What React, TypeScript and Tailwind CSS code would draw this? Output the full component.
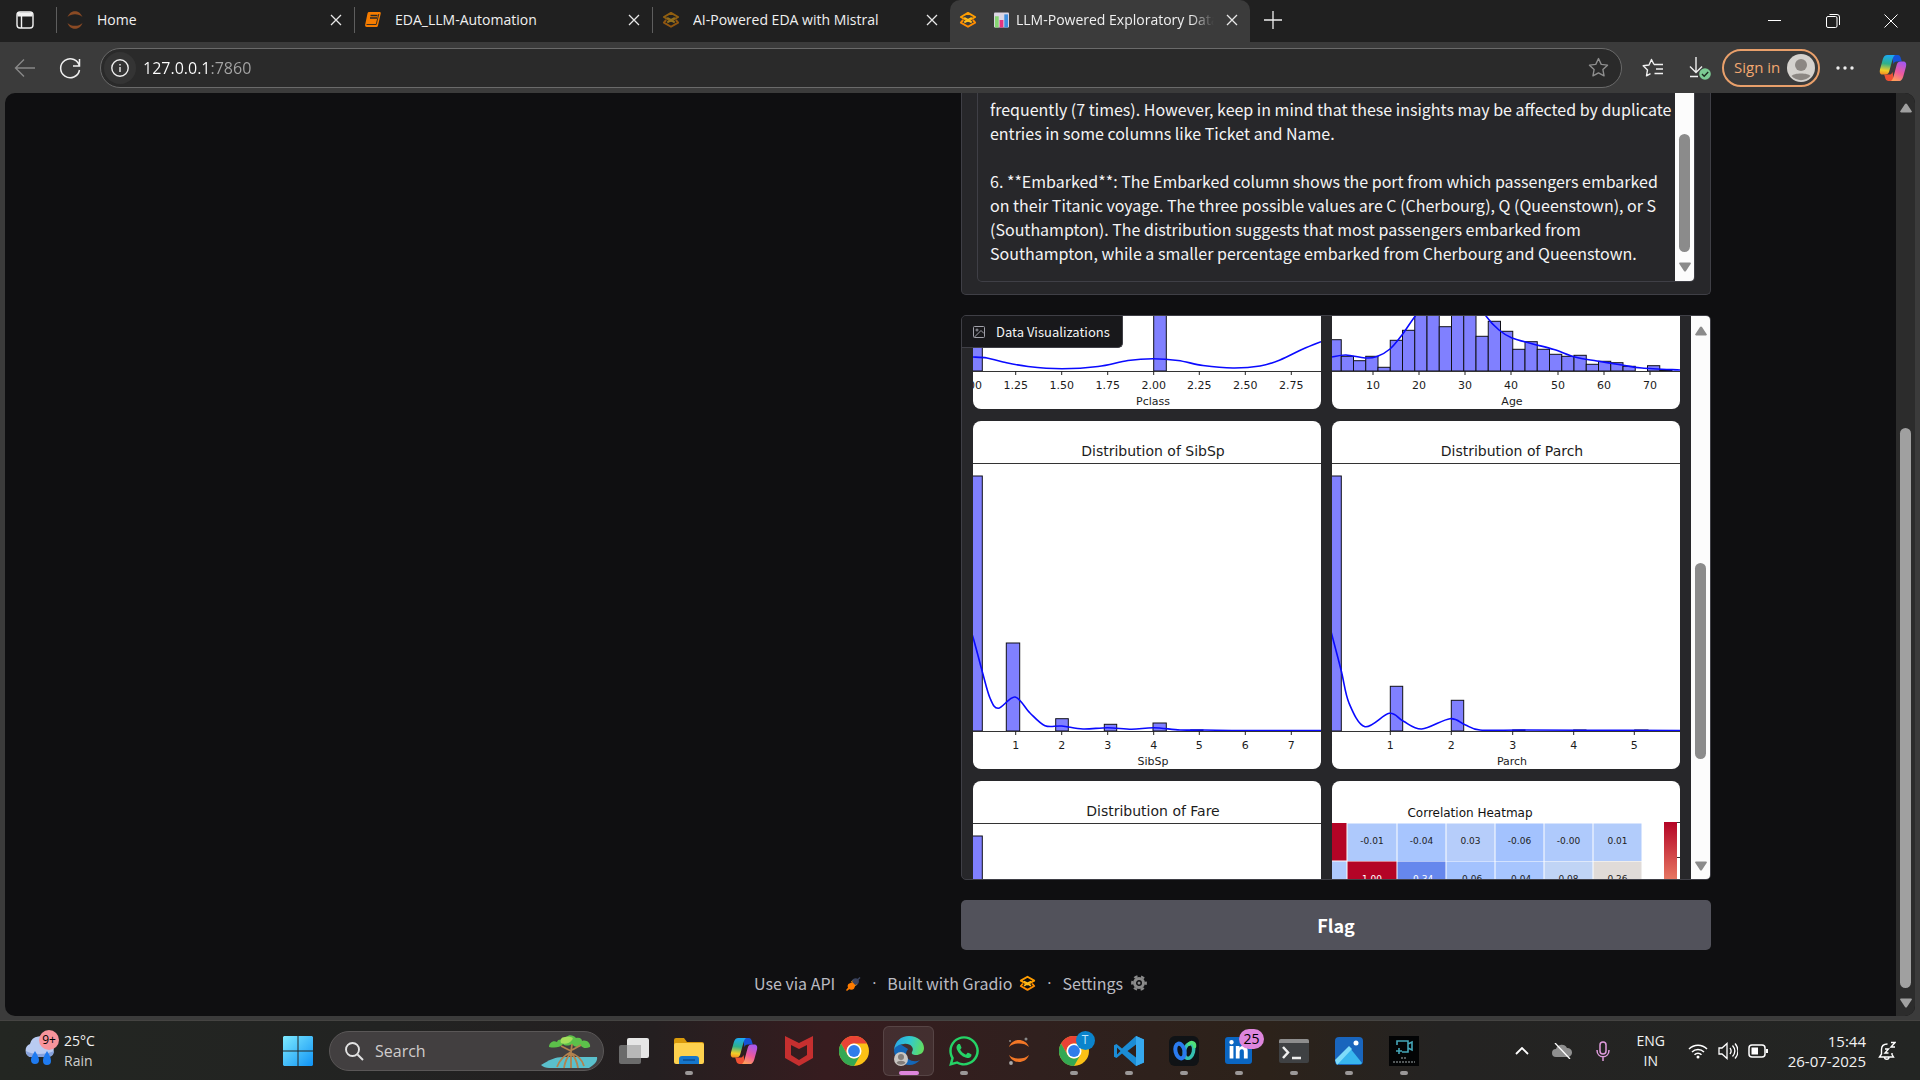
import { type ReactNode } from "react";
import { FaWhatsapp } from "react-icons/fa";
import { FaLinkedinIn } from "react-icons/fa6";

type Pt = [number, number];
type Bar = [number, number, number];

/* Catmull-Rom spline through the given points, as an SVG path. */
function spline(p: Pt[]): string {
  let d = `M${p[0][0]} ${p[0][1]}`;
  for (let i = 0; i < p.length - 1; i++) {
    const a = p[i - 1] ?? p[i];
    const b = p[i];
    const c = p[i + 1];
    const e = p[i + 2] ?? c;
    d += ` C${b[0] + (c[0] - a[0]) / 6} ${b[1] + (c[1] - a[1]) / 6} ${c[0] - (e[0] - b[0]) / 6} ${c[1] - (e[1] - b[1]) / 6} ${c[0]} ${c[1]}`;
  }
  return d;
}

/* ---------- charts ---------- */

const AXIS = 310;

interface HistProps {
  title?: string;
  label: string;
  ticks: [number, string][];
  bars: Bar[];
  curves: Pt[][];
  cropped?: boolean;
}

function Histogram({ title, label, ticks, bars, curves, cropped }: HistProps) {
  return (
    <button aria-label={`Distribution of ${label}`} className={`block w-full overflow-hidden bg-white ${cropped ? "rounded-b-lg" : "rounded-lg"}`}>
      <svg viewBox={cropped ? "0 255 348 93" : "0 0 348 348"} className="block w-full font-['DejaVu_Sans',sans-serif]" fill="#1c1c1c">
        {bars.map(([x0, x1, y]) => (
          <rect key={x0} x={x0} y={y} width={x1 - x0} height={AXIS - y} fill="#8080ff" stroke="#101018" strokeWidth="1" />
        ))}
        {curves.map((c, i) => (
          <path key={i} d={spline(c)} fill="none" stroke="#0a0aff" strokeWidth="1.6" />
        ))}
        <path d={`M0 42.500H348M0 ${AXIS + 0.5}H348`} stroke="#333" strokeWidth="1" />
        {ticks.map(([x, t]) => (
          <g key={x}>
            <path d={`M${x} ${AXIS}v4`} stroke="#222" strokeWidth="1" />
            <text x={x} y={328} fontSize="11" textAnchor="middle">{t}</text>
          </g>
        ))}
        {title && <text x={180} y={35} fontSize="14" textAnchor="middle">{title}</text>}
        <text x={180} y={344} fontSize="11" textAnchor="middle">{label}</text>
      </svg>
    </button>
  );
}

const HEAT_X = [15, 65, 114, 163, 212, 261, 310];
const HEAT_ROWS: { y: number; cells: [string, string, string][] }[] = [
  { y: 42, cells: [["-0.01", "#aec9fc", "#222"], ["-0.04", "#a7c5fe", "#222"], ["0.03", "#b6cdfa", "#222"], ["-0.06", "#a3c2fe", "#222"], ["-0.00", "#afcafc", "#222"], ["0.01", "#b2ccfb", "#222"]] },
  { y: 80, cells: [["1.00", "#b40426", "#fff"], ["-0.34", "#6687ed", "#fff"], ["-0.06", "#a3c2fe", "#222"], ["-0.04", "#a7c5fe", "#222"], ["0.08", "#c0d4f5", "#222"], ["0.26", "#e0dbd8", "#222"]] },
];

function Heatmap() {
  return (
    <button aria-label="Correlation Heatmap" className="block w-full overflow-hidden rounded-lg bg-white">
      <svg viewBox="0 0 348 348" className="block w-full font-['DejaVu_Sans',sans-serif]">
        <defs>
          <linearGradient id="coolwarm" x1="0" y1="0" x2="0" y2="1">
            <stop offset="0" stopColor="#b40426" />
            <stop offset="0.25" stopColor="#f08a6c" />
            <stop offset="0.5" stopColor="#dddcdc" />
            <stop offset="0.75" stopColor="#8db0fe" />
            <stop offset="1" stopColor="#3b4cc0" />
          </linearGradient>
        </defs>
        <text x={138} y={36} fontSize="12" textAnchor="middle" fill="#111">Correlation Heatmap</text>
        <rect x={-34} y={42} width={48.5} height={37.5} fill="#b40426" />
        <rect x={-34} y={80.5} width={48.5} height={37.5} fill="#aec9fc" />
        {HEAT_ROWS.map((r) =>
          r.cells.map(([t, bg, fg], i) => (
            <g key={`${r.y}-${i}`}>
              <rect x={HEAT_X[i] + 0.5} y={r.y + 0.5} width={HEAT_X[i + 1] - HEAT_X[i] - 1} height={37.5} fill={bg} />
              <text x={(HEAT_X[i] + HEAT_X[i + 1]) / 2} y={r.y + 21} fontSize="9" textAnchor="middle" fill={fg}>{t}</text>
            </g>
          )),
        )}
        <rect x={332} y={41} width={13} height={268} fill="url(#coolwarm)" />
        <path d="M345 41.500h3M345 76.500h3" stroke="#333" />
      </svg>
    </button>
  );
}

const AGE_TOPS = [278.7, 295.3, 299.7, 295.3, 306.3, 279.3, 269.3, 200, 180, 265.7, 180, 200, 275.3, 260.3, 270.3, 288.3, 280.7, 288.3, 293.3, 295.3, 294.3, 303.3, 300.3, 301.7, 305.3, 310, 304.7, 309];
const AGE_BARS: Bar[] = AGE_TOPS.map((y, i): Bar => [-3 + i * 12.25, 9.25 + i * 12.25, y]).filter((b) => b[2] < 310);

const TICKS_7: number[] = [42.7, 88.7, 134.7, 180.7, 226.3, 272.3, 318.3];

function Gallery() {
  return (
    <div className="grid min-w-0 flex-1 auto-rows-max grid-cols-2 content-start gap-x-[11px] gap-y-3 overflow-hidden px-[11px]">
      <Histogram
        cropped
        label="Pclass"
        ticks={[[-3.3, "1.00"], ...["1.25", "1.50", "1.75", "2.00", "2.25", "2.50", "2.75"].map((t, i): [number, string] => [TICKS_7[i], t])]}
        bars={[[-3, 9.3, 200], [180.7, 193.3, 200]]}
        curves={[[[0, 296], [14, 297], [30, 301], [55, 305.5], [89, 307.7], [125, 305.5], [155, 299.5], [180, 297.7], [205, 299.5], [230, 304.5], [260, 307], [287, 305], [307, 299], [330, 288], [348, 280.7]]]}
      />
      <Histogram
        cropped
        label="Age"
        ticks={["10", "20", "30", "40", "50", "60", "70"].map((t, i): [number, string] => [[41, 87, 133, 179, 226, 272, 318][i], t])}
        bars={AGE_BARS}
        curves={[
          [[0, 296], [14, 294], [33, 297], [45, 295.5], [58, 288], [70, 274], [84, 254], [100, 235]],
          [[143, 235], [154, 255], [167, 269], [180, 277], [200, 282.7], [222, 288.5], [243, 296], [265, 300], [290, 304], [310, 307], [348, 309]],
        ]}
      />
      <Histogram
        title="Distribution of SibSp"
        label="SibSp"
        ticks={[[-3.3, "0"], ...["1", "2", "3", "4", "5", "6", "7"].map((t, i): [number, string] => [TICKS_7[i], t])]}
        bars={[[-3, 9.3, 55], [33.3, 46.7, 222], [82.7, 95.3, 297.7], [131.3, 143.7, 303.3], [180, 193.3, 302], [217.7, 230, 309]]}
        curves={[[[-4, 208], [0, 216.3], [9.3, 250.7], [17, 277], [25.3, 287.3], [42, 276], [57, 292], [72, 304.7], [88.7, 305], [110, 308], [134.7, 306.7], [158.7, 308.3], [180.7, 306.7], [207, 309], [230, 309], [272, 309.5], [348, 309.5]]]}
      />
      <Histogram
        title="Distribution of Parch"
        label="Parch"
        ticks={[[-3.3, "0"], [58.3, "1"], [119.3, "2"], [180.7, "3"], [241.7, "4"], [302.3, "5"]]}
        bars={[[-3, 9.3, 55], [58.3, 70.7, 265.3], [119.3, 131.7, 279.3], [180.7, 193, 309], [241.7, 254, 309], [302.7, 316, 309]]}
        curves={[[[-3, 205], [0, 214.3], [9.3, 250], [17, 282], [33, 305.7], [57.3, 292.3], [71, 300], [89.7, 308], [118, 297.7], [133, 303.7], [148, 309], [190, 309], [250, 309.3], [348, 309.5]]]}
      />
      <Histogram title="Distribution of Fare" label="Fare" ticks={[]} bars={[[-3, 9.3, 55]]} curves={[]} />
      <Heatmap />
    </div>
  );
}

/* ---------- small icons ---------- */

function CloseX() {
  return (
    <svg viewBox="0 0 12 12" className="size-3" fill="none" stroke="#e8e8e8" strokeWidth="1.3">
      <path d="M1 1l10 10M11 1L1 11" />
    </svg>
  );
}

function GradioLogo({ className }: { className: string }) {
  return (
    <svg viewBox="0 0 24 24" className={className} fill="none" strokeLinejoin="round">
      <path d="M2.500 8L12 2.500 21.500 8 12 13.500z" stroke="#ff9d00" strokeWidth="2.600" />
      <path d="M7 15.200l5-2.700 5 2.700" stroke="#ffc01e" strokeWidth="2.400" />
      <path d="M7 9l5 2.500L17 9" stroke="#ffc01e" strokeWidth="2" />
      <path d="M5.500 12L2.500 15.500 12 21l9.500-5.500-3-3.500" stroke="#ff8c00" strokeWidth="2.600" />
    </svg>
  );
}

function JupyterRing({ className, color }: { className: string; color: string }) {
  return (
    <svg viewBox="0 0 20 24" className={className} fill={color}>
      <path d="M1 8.500C3 3.500 6.500 1.500 10 1.500s7 2 9 7C16.500 6 13.500 5 10 5S3.500 6 1 8.500z" />
      <path d="M1 15.500c2 5 5.500 7 9 7s7-2 9-7c-2.500 2.500-5.500 3.500-9 3.500s-6.500-1-9-3.500z" />
    </svg>
  );
}

function Copilot({ className, id }: { className: string; id: string }) {
  return (
    <svg viewBox="0 0 30 30" className={className}>
      <defs>
        <linearGradient id={`${id}a`} x1="0.500" y1="0" x2="0.400" y2="1">
          <stop offset="0" stopColor="#1ba9f5" />
          <stop offset="0.450" stopColor="#2fb08a" />
          <stop offset="0.800" stopColor="#f0cf28" />
          <stop offset="1" stopColor="#f58f22" />
        </linearGradient>
        <linearGradient id={`${id}b`} x1="0.700" y1="0" x2="0.300" y2="1">
          <stop offset="0" stopColor="#a457f0" />
          <stop offset="0.550" stopColor="#ee5a9c" />
          <stop offset="1" stopColor="#ffa05a" />
        </linearGradient>
      </defs>
      <path d="M14 1h6c2.500 0 3 2 3.700 4.500L24.500 8H19c-2 0-3 1-3.500 3z" fill="#1552d8" />
      <path d="M16 29h-6c-2.500 0-3-2-3.700-4.500L5.500 22H11c2 0 3-1 3.500-3z" fill="#ee5133" />
      <path d="M9 1h8.500c-1.500.5-2.300 2-3 4.500L11 18.500C10.300 21 9 22 6.500 22H4C1 22 .3 19.500 1.200 16L4 6C5 2.500 6.500 1 9 1z" fill={`url(#${id}a)`} />
      <path d="M21 29h-8.500c1.500-.5 2.300-2 3-4.500L19 11.500c.7-2.500 2-3.500 4.500-3.500H26c3 0 3.700 2.500 2.800 6L26 24c-1 3.500-2.500 5-5 5z" fill={`url(#${id}b)`} />
    </svg>
  );
}

function ChartEmoji() {
  return (
    <svg viewBox="0 0 16 16" className="h-4 w-[15px] shrink-0">
      <rect width="16" height="16" rx="1" fill="#dcd6e4" />
      <rect x="1" y="4" width="4" height="12" fill="#86d672" />
      <rect x="6" y="8" width="4" height="8" fill="#e5357f" />
      <rect x="11" y="2" width="4" height="14" fill="#3e8fe0" />
    </svg>
  );
}

/* ---------- browser chrome ---------- */

function Tab({ icon, title, active }: { icon: ReactNode; title: string; active?: boolean }) {
  return (
    <div className={`flex h-[42px] min-w-0 items-center pb-0.5 pr-3 ${active ? "w-[300px] rounded-t-[10px] bg-[#3b3b3b] pl-2" : "w-[298px] pl-0"}`}>
      {!active && <span className="mr-2 h-[26px] w-px bg-[#5e5e5e]" />}
      <span className="flex w-5 shrink-0 justify-center">{icon}</span>
      {active && <span className="ml-4 flex shrink-0"><ChartEmoji /></span>}
      <span className={`min-w-0 flex-1 overflow-hidden whitespace-nowrap text-sm text-[#f0f0f0] ${active ? "ml-[7px] mr-3 [mask-image:linear-gradient(to_right,black_88%,transparent)]" : "ml-3"}`}>{title}</span>
      <button aria-label={`Close ${title}`} className="shrink-0"><CloseX /></button>
    </div>
  );
}

function TabBar() {
  return (
    <div className="flex h-[42px] items-center bg-[#202020]">
      <button aria-label="Tab actions" className="flex w-[56px] shrink-0 pb-0.5 pl-4">
        <svg viewBox="0 0 18 18" className="size-[18px]" fill="none" stroke="#f2f2f2" strokeWidth="1.400">
          <rect x="1" y="1" width="16" height="16" rx="3" />
          <path d="M1.500 3.500h15" strokeWidth="4" />
          <path d="M5.500 5v12" />
        </svg>
      </button>
      <Tab title="Home" icon={<JupyterRing className="h-5 w-[18px]" color="#8a4a24" />} />
      <Tab
        title="EDA_LLM-Automation"
        icon={
          <svg viewBox="0 0 18 18" className="size-[18px]">
            <path d="M5 1h10.500c1 0 1.500.7 1.200 1.700L14 14.500c-.3 1-.8 1.500-2 1.500H3.500C1.500 16.500.8 15 1.200 13.500L3.500 2.500C3.800 1.500 4.300 1 5 1z" fill="#f57c00" />
            <path d="M6.500 4.500h7M6 7h7" stroke="#262626" strokeWidth="1.300" />
            <path d="M2.500 13.500h9.700L14.800 3" stroke="#262626" strokeWidth="0.900" fill="none" />
          </svg>
        }
      />
      <Tab title="AI-Powered EDA with Mistral" icon={<GradioLogo className="size-[18px] opacity-50" />} />
      <Tab active title="LLM-Powered Exploratory Data Analysis" icon={<GradioLogo className="size-[18px]" />} />
      <button aria-label="New tab" className="ml-3.5 pb-0.5">
        <svg viewBox="0 0 18 18" className="size-[18px]" stroke="#eee" strokeWidth="1.300"><path d="M9 0v18M0 9h18" /></svg>
      </button>
      <div className="ml-auto flex">
        <button aria-label="Minimize" className="flex w-[58px] justify-center">
          <svg viewBox="0 0 14 14" className="size-[14px]" stroke="#fff"><path d="M0 6.500h13" /></svg>
        </button>
        <button aria-label="Restore" className="flex w-[58px] justify-center">
          <svg viewBox="0 0 14 14" className="size-[14px]" fill="none" stroke="#fff"><rect x="0.500" y="2.500" width="10.500" height="11" rx="1.500" /><path d="M3.500.5h7.500a2.500 2.500 0 0 1 2.500 2.500v8" /></svg>
        </button>
        <button aria-label="Close window" className="flex w-[58px] justify-center">
          <svg viewBox="0 0 14 14" className="size-[14px]" stroke="#fff"><path d="M.5.5l13 13M13.500.5l-13 13" /></svg>
        </button>
      </div>
    </div>
  );
}

const STAR = "M10 1.500l2.600 5.500 6 .8-4.400 4.200 1.100 6L10 15.100 4.700 18l1.100-6L1.400 7.800l6-.8z";

function Toolbar() {
  return (
    <div className="flex h-[51px] items-center bg-[#3b3b3b]">
      <button aria-label="Back" className="ml-[14px]">
        <svg viewBox="0 0 22 20" className="h-5 w-[22px]" fill="none" stroke="#888" strokeWidth="1.400"><path d="M21 10H1.500M10 1.500L1.500 10l8.500 8.500" /></svg>
      </button>
      <button aria-label="Refresh" className="ml-[23px]">
        <svg viewBox="0 0 22 22" className="size-[22px]" fill="none" stroke="#f0f0f0" strokeWidth="1.500"><path d="M20.500 9.500A9.500 9.500 0 1 0 20.500 13M20.500 2v7h-6.500" /></svg>
      </button>
      <div className="ml-[19px] flex h-10 flex-1 items-center rounded-full border border-[#6a6a6a] bg-[#2a2a2a] pl-[3px] pr-3">
        <button aria-label="Site information" className="flex size-8 items-center justify-center rounded-full bg-[#343434]">
          <svg viewBox="0 0 18 18" className="size-[18px]" fill="none" stroke="#eee" strokeWidth="1.400"><circle cx="9" cy="9" r="8.200" /><path d="M9 8v5M9 5v1.500" /></svg>
        </button>
        <input
          aria-label="Address"
          defaultValue="127.0.0.1:7860"
          className="ml-[7px] min-w-0 flex-1 bg-[linear-gradient(90deg,#ffffff_68px,#a5a5a5_68px)] bg-clip-text text-base text-transparent outline-none"
        />
        <button aria-label="Add to favorites">
          <svg viewBox="0 0 20 20" className="size-[21px]" fill="none" stroke="#8e8e8e" strokeWidth="1.300" strokeLinejoin="round"><path d={STAR} /></svg>
        </button>
      </div>
      <button aria-label="Favorites" className="ml-5">
        <svg viewBox="0 0 22 20" className="h-5 w-[22px]" fill="none" stroke="#f0f0f0" strokeWidth="1.400" strokeLinejoin="round"><path d="M12 6.500L9.500 1.500 7 7l-5.800.8 4.300 4.100-1 6L8.500 15.700M12 6.500h9M14 11h7M12.500 15.500h8.500" /></svg>
      </button>
      <button aria-label="Downloads" className="ml-6">
        <svg viewBox="0 0 24 26" className="h-[26px] w-6" fill="none" stroke="#f0f0f0" strokeWidth="1.400"><path d="M8 2v15M2 11.500l6 6 6-6M2 21.500h8" /><circle cx="17" cy="19" r="5.800" fill="#7ccb93" stroke="none" /><path d="M14 19l2.200 2.200 4-4.200" stroke="#1d2b20" /></svg>
      </button>
      <button className="ml-2.5 flex h-[38px] w-[98px] items-center justify-between rounded-full border-2 border-[#e9a06b] pl-2.5 pr-[3px] text-[15px] text-[#f3a871]">
        Sign in
        <svg viewBox="0 0 28 28" className="size-7"><circle cx="14" cy="14" r="14" fill="#d5d2ce" /><circle cx="14" cy="11" r="6" fill="#8c8783" /><path d="M4.500 22c2-3.500 17-3.500 19 0a13 13 0 0 1-19 0z" fill="#8c8783" /></svg>
      </button>
      <button aria-label="Settings and more" className="ml-4">
        <svg viewBox="0 0 18 4" className="h-1 w-[18px]" fill="#eee"><circle cx="2" cy="2" r="1.700" /><circle cx="9" cy="2" r="1.700" /><circle cx="16" cy="2" r="1.700" /></svg>
      </button>
      <button aria-label="Copilot" className="ml-[25px] mr-[13px]"><Copilot className="size-7" id="cp" /></button>
    </div>
  );
}

function Triangle({ down, className }: { down?: boolean; className: string }) {
  return (
    <svg viewBox="0 0 12 10" className={`h-2.5 w-3 shrink-0 ${className}`} fill="currentColor">
      <path d={down ? "M1.200.5h9.600c1 0 1.400.9.800 1.600L7 9c-.6.800-1.400.8-2 0L.4 2.100C-.2 1.400.2.500 1.200.5z" : "M1.200 9.500h9.600c1 0 1.400-.9.800-1.600L7 1c-.6-.8-1.400-.8-2 0L.4 7.900c-.6.700-.2 1.600.8 1.600z"} />
    </svg>
  );
}

/* ---------- page ---------- */

const INSIGHTS = `frequently (7 times). However, keep in mind that these insights may be affected by duplicate
entries in some columns like Ticket and Name.

6. **Embarked**: The Embarked column shows the port from which passengers embarked
on their Titanic voyage. The three possible values are C (Cherbourg), Q (Queenstown), or S
(Southampton). The distribution suggests that most passengers embarked from
Southampton, while a smaller percentage embarked from Cherbourg and Queenstown.`;

function Dot() {
  return <span className="w-[26px] text-center font-['Open_Sans',sans-serif]">·</span>;
}

function Page() {
  return (
    <div className="flex flex-1 bg-[#3b3b3b] px-[5px] pb-1">
      <main className="flex flex-1 overflow-hidden rounded-[10px] bg-[#0f0f11]">
        <div className="min-w-0 flex-1 font-['Noto_Sans_CJK_SC',sans-serif] text-[#f4f4f5]">
          <div className="mx-auto grid max-w-[1521px] grid-cols-2 gap-[21px]">
            <div />
            <div className="flex flex-col gap-5">
              <div className="rounded-b-[5px] border border-t-0 border-[#3f3f46] bg-[#27272a] px-[15px] pb-3">
                <div className="flex h-[189px] overflow-hidden rounded-b-[5px] border border-t-0 border-[#3f3f46]">
                  <textarea
                    aria-label="Dataset insights"
                    readOnly
                    value={INSIGHTS}
                    className="block min-w-0 flex-1 resize-none overflow-hidden whitespace-pre bg-transparent pl-3 pt-1 text-base leading-6 outline-none"
                  />
                  <div className="flex w-[19px] shrink-0 flex-col items-center bg-[#fcfcfc] text-[#8b8b8b]">
                    <div className="mt-[41px] h-[118px] w-[11px] rounded-full bg-[#8b8b8b]" />
                    <Triangle down className="mt-2.5" />
                  </div>
                </div>
              </div>
              <div className="relative flex h-[565px] overflow-hidden rounded-[5px] border border-[#3f3f46] bg-[#27272a]">
                <Gallery />
                <div className="flex w-[19px] shrink-0 flex-col items-center bg-[#fcfcfc] text-[#8b8b8b]">
                  <Triangle className="mt-2.5" />
                  <div className="mt-[227px] h-[196px] w-[11px] rounded-full bg-[#8b8b8b]" />
                  <Triangle down className="mb-2 mt-auto" />
                </div>
                <div className="absolute left-0 top-0 flex h-8 items-center gap-[11px] rounded-br-[5px] border-b border-r border-[#3f3f46] bg-[#18181b] pl-[11px] pr-3 text-[13px]">
                  <svg viewBox="0 0 24 24" className="size-3" fill="none" stroke="#a1a1aa" strokeWidth="2"><rect x="1" y="1" width="22" height="22" rx="2" /><circle cx="8" cy="8" r="2" /><path d="M22 15l-6-6L3 22" /></svg>
                  Data Visualizations
                </div>
              </div>
              <button className="h-[50px] rounded-[5px] bg-[#52525b] text-lg font-semibold text-white">Flag</button>
            </div>
          </div>
          <footer className="mt-5 flex h-[26px] items-center justify-center text-base text-[#bbbbc2]">
            <button className="flex items-center">
              Use via API
              <svg viewBox="0 0 16 16" className="ml-[11px] size-[15px]">
                <path d="M2.500 8.500l5-2.500 3 3-2 4.500c-1.500 1.500-4 1.500-5.500 0s-1.700-3.500-.5-5zM0 15l2.500-3 1.500 1.500L1 16z" fill="#ff7c00" />
                <path d="M6 5.500c1-2.500 4-4 6.500-2.500L14.500 1l1 1L13.500 4c1 2.500-.5 5.500-3 6.500z" fill="#3c4560" />
                <path d="M5.500 6.500l1.500-1.500M9.500 10.500L11 9" stroke="#ff9d00" />
              </svg>
            </button>
            <Dot />
            <a href="#gradio" className="flex items-center">Built with Gradio<GradioLogo className="ml-[7px] size-[17px]" /></a>
            <Dot />
            <button className="flex items-center">
              Settings
              <svg viewBox="0 0 16 16" className="ml-2 size-4" fill="none" stroke="#8a8a8a">
                <circle cx="8" cy="8" r="4.500" strokeWidth="3" /><circle cx="8" cy="8" r="1.500" fill="#8a8a8a" stroke="none" />
                <circle cx="8" cy="8" r="6.800" strokeWidth="2.200" strokeDasharray="3.560 3.560" strokeDashoffset="1.700" />
              </svg>
            </button>
          </footer>
        </div>
        <div className="flex w-[19px] shrink-0 flex-col items-center bg-[#2c2c2c] text-[#a0a0a0]">
          <Triangle className="mt-2.5" />
          <div className="mt-[315px] w-[11px] flex-1 rounded-full bg-[#a0a0a0]" />
          <Triangle down className="mb-2 mt-2.5" />
        </div>
      </main>
    </div>
  );
}

/* ---------- taskbar ---------- */

function Chrome() {
  return (
    <svg viewBox="0 0 30 30" className="size-[30px]">
      <circle cx="15" cy="15" r="15" fill="#fbc116" />
      <path d="M2 7.500A15 15 0 0 1 28 7.500H15A7.500 7.500 0 0 0 8.500 18.700z" fill="#ea4335" />
      <path d="M2 7.500l6.500 11.200A7.500 7.500 0 0 0 21.500 18.700L15 30A15 15 0 0 1 2 7.500z" fill="#34a853" />
      <circle cx="15" cy="15" r="7.500" fill="#fff" />
      <circle cx="15" cy="15" r="5.900" fill="#2f7de9" />
    </svg>
  );
}

const apps: { name: string; running?: boolean; active?: boolean; icon: ReactNode }[] = [
  { name: "Task view", icon: <svg viewBox="0 0 30 30" className="size-[30px]"><rect x="8" y="2" width="22" height="20" rx="2" fill="#e6e6e6" /><rect x="0" y="9" width="22" height="19" rx="2" fill="#6b6b6b" /><path d="M8 9h14v13H8z" fill="#b8b8b8" /></svg> },
  { name: "File Explorer", running: true, icon: <svg viewBox="0 0 30 30" className="size-[30px]"><path d="M0 4a2 2 0 0 1 2-2h8l3 4h15a2 2 0 0 1 2 2v4H0z" fill="#d99a0b" /><rect y="7" width="30" height="21" rx="2" fill="#fdd14e" /><path d="M5 28v-5a3 3 0 0 1 3-3h14a3 3 0 0 1 3 3v5z" fill="#1576cc" /><path d="M9 24h12" stroke="#0b4c90" strokeWidth="1.500" /></svg> },
  { name: "Copilot", icon: <Copilot className="size-[28px]" id="tb" /> },
  { name: "McAfee", icon: <svg viewBox="0 0 28 30" className="h-[30px] w-7"><path d="M0 0l14 7L28 0v22l-14 8-14-8zM6 9v10l8 5 8-5V9l-8 4z" fill="#c52f2f" fillRule="evenodd" /></svg> },
  { name: "Chrome", icon: <Chrome /> },
  {
    name: "Edge",
    running: true,
    active: true,
    icon: (
      <svg viewBox="0 0 30 30" className="size-[30px]">
        <defs><linearGradient id="edge" x1="0" y1="0.300" x2="1" y2="0.500"><stop offset="0" stopColor="#2aa5e6" /><stop offset="0.500" stopColor="#31c9cf" /><stop offset="1" stopColor="#62dd5f" /></linearGradient></defs>
        <path d="M0 15a15 15 0 0 0 26 9c-6 3-14 0-14-6 0-3 2-4 2-5L6 8C2 10 0 12 0 15z" fill="#1467b8" />
        <path d="M0 14C1 5 7 0 15 0c9 0 15 6 15 12 0 5-4 7-8 7-3 0-5-1-4-3 3-4-2-9-8-8-5 0-9 3-10 6z" fill="url(#edge)" />
        <circle cx="7" cy="23" r="7" fill="#c9c6c3" /><circle cx="7" cy="21" r="3" fill="#827d7a" /><path d="M2.500 27c1-3 8-3 9 0a7 7 0 0 1-9 0z" fill="#827d7a" />
      </svg>
    ),
  },
  { name: "WhatsApp", running: true, icon: <FaWhatsapp className="size-[34px] text-[#25d366]" /> },
  { name: "Jupyter", icon: <svg viewBox="0 0 24 28" className="h-7 w-6"><path d="M2 10C4 5 8 3 12 3s8 2 10 7c-2.500-2.500-6-3.500-10-3.500S4.500 7.500 2 10zM2 18c2 5 6 7 10 7s8-2 10-7c-2.500 2.500-6 3.500-10 3.500S4.500 20.500 2 18z" fill="#f37726" /><circle cx="19" cy="2" r="1.500" fill="#888" /><circle cx="4" cy="26" r="1.900" fill="#aaa" /><circle cx="3" cy="4" r="1" fill="#888" /></svg> },
  { name: "Chrome profile", running: true, icon: <span className="relative"><Chrome /><span className="absolute -right-1.5 -top-[5px] flex size-[19px] items-center justify-center rounded-full bg-[#0b84cc] text-xs text-[#bfe6ff]">T</span></span> },
  { name: "Visual Studio Code", running: true, icon: <svg viewBox="0 0 30 30" className="size-[30px]"><path d="M22 0l8 3.500v23L22 30 8 17.500 2.500 22 0 20.700V9.300L2.500 8 8 12.500zM22 8.500L13.500 15l8.500 6.500zM3 11.500v7L6.500 15z" fill="#1b8dd6" fillRule="evenodd" /><path d="M22 0l8 3.500v23L22 30z" fill="#36a9ef" /></svg> },
  { name: "Webex", running: true, icon: <svg viewBox="0 0 30 30" className="size-[30px]"><rect width="30" height="30" rx="6" fill="#101316" /><ellipse cx="20" cy="15" rx="4.500" ry="7.500" transform="rotate(14 20 15)" stroke="#35c0b0" strokeWidth="3.500" fill="none" /><path d="M20 8c2.500-2.500 6-1.500 5.500 2.500" stroke="#4fe07a" strokeWidth="3.500" fill="none" strokeLinecap="round" /><ellipse cx="11" cy="15" rx="4.500" ry="7.500" transform="rotate(-14 11 15)" stroke="#2a7bf0" strokeWidth="4" fill="none" /></svg> },
  { name: "LinkedIn", running: true, icon: <span className="relative flex size-[27px] items-center justify-center rounded-[3px] bg-[#0a66c2]"><FaLinkedinIn className="size-[21px] text-white" /><span className="absolute -right-3 -top-2 flex h-5 w-[25px] items-center justify-center rounded-full bg-[#de86dc] text-sm text-black">25</span></span> },
  { name: "Terminal", running: true, icon: <svg viewBox="0 0 30 24" className="h-6 w-[30px]"><rect width="30" height="24" rx="2" fill="#3f4143" /><path d="M0 2a2 2 0 0 1 2-2h26a2 2 0 0 1 2 2v2H0z" fill="#8e8e8e" /><path d="M4 8l5 5.500L4 19M13 19h9" stroke="#eee" strokeWidth="2.500" fill="none" /></svg> },
  { name: "Photos", running: true, icon: <svg viewBox="0 0 28 28" className="size-7"><rect width="28" height="28" rx="4" fill="#1965bd" /><path d="M1 27L15 11l12 15-1 1z" fill="#38b6ee" /><path d="M0 23L14 9l3 3L2 28z" fill="#7fdcfa" /><circle cx="21" cy="6" r="2.500" fill="#fff" /></svg> },
  { name: "Screen recorder", running: true, icon: <svg viewBox="0 0 30 30" className="size-[30px]"><rect width="30" height="30" fill="#030405" /><path d="M8 9V5h11v11h-6M19 8l4-2v8l-4-2M10 12v6M7 15h6" stroke="#45a6b8" strokeWidth="1.600" fill="none" /><path d="M12 22h6M4 26h22" stroke="#6f7476" strokeWidth="1.500" strokeDasharray="2 1" /></svg> },
];

function Taskbar() {
  return (
    <div className="flex h-[60px] items-center border-t border-[#454442] bg-[linear-gradient(90deg,#232622_0%,#222322_20%,#241f20_34%,#361c1f_43%,#30201e_54%,#2c221a_66%,#242322_75%,#232523_100%)] text-[#f2f2f2]">
      <button className="flex w-[283px] shrink-0 items-center pl-[23px] text-left text-sm leading-5">
        <span className="relative mr-[7px]">
          <svg viewBox="0 0 34 34" className="size-[34px]">
            <path d="M7 23a7 7 0 0 1 0-13A9.500 9.500 0 0 1 25 8a8 8 0 0 1 1 15z" fill="#b9cbf2" />
            <path d="M3 17c6 4 20 4 28 0a6 6 0 0 1-5 6H8c-2 0-5-2-5-6z" fill="#86a2dc" />
            <path d="M12 17c3 5 4 7 4 9a4 4 0 0 1-8 0c0-2 1-4 4-9zM24 17c3 5 4 7 4 10a4 4 0 0 1-8 0c0-3 1-5 4-10z" fill="#1f7bf0" />
          </svg>
          <span className="absolute -top-1 left-4 flex size-5 items-center justify-center rounded-full bg-[#f8949c] text-xs text-black">9+</span>
        </span>
        <span>25°C<br /><span className="text-[#cfcfcf]">Rain</span></span>
      </button>
      <button aria-label="Start">
        <svg viewBox="0 0 30 30" className="size-[30px]">
          <defs><linearGradient id="win" x1="0" y1="0" x2="1" y2="1"><stop offset="0" stopColor="#7eeaff" /><stop offset="1" stopColor="#0f93f5" /></linearGradient></defs>
          <path d="M1 0h13.500v14.500H0V1zM15.500 0H29l1 1v13.500H15.500zM0 15.500h14.500V30H1l-1-1zM15.500 15.500H30V29l-1 1H15.500z" fill="url(#win)" />
        </svg>
      </button>
      <label className="relative ml-4 flex h-10 w-[275px] items-center overflow-hidden rounded-full border border-[#5a5757] bg-[#423f40] pl-3.5">
        <svg viewBox="0 0 20 20" className="size-5" fill="none" stroke="#e2e2e2" strokeWidth="1.900"><circle cx="8.500" cy="8.500" r="6.500" /><path d="M13.500 13.500L19 19" /></svg>
        <input aria-label="Search" placeholder="Search" className="ml-[11px] w-32 bg-transparent text-base placeholder-[#cfcccc] outline-none" />
        <svg viewBox="0 0 58 34" className="ml-auto mr-1 h-[34px] w-[58px]" fill="none">
          <path d="M0 31c8-5 14-8 22-8h34c1 4-3 8-8 11H8c-3 0-6-1-8-3z" fill="#5ac0cc" />
          <path d="M8 13c0-4 4-7 8-5 1-3 5-3 7-1 1-6 8-8 12-3 4-1 6 1 6 3 5-2 9 3 8 6-4 2-7 1-9-1-3 2-7 1-9-2-3 2-7 2-9 0-3 4-9 4-14 3z" fill="#5cc04a" />
          <path d="M24 3c-4 0-5 3-4 6 4 2 9 0 11-3 3-3-3-4-7-3z" fill="#a3df5c" />
          <path d="M31 10l-1 8c-6 3-11 7-14 15M30 19c-4 4-6 8-7 15M30 19v15M30 19c4 4 6 8 7 15M30 19c6 2 11 6 13 13M30 17l-10-5M31 16l9-5" stroke="#b3824e" strokeWidth="1.800" />
        </svg>
      </label>
      <nav className="ml-0.5 flex">
        {apps.map((a) => (
          <button
            key={a.name}
            aria-label={a.name}
            className={`mx-[2px] flex h-[50px] w-[51px] flex-col items-center rounded-md border pt-[7px] ${a.active ? "border-white/10 bg-white/8" : "border-transparent"}`}
          >
            <span className="flex h-[34px] items-center justify-center">{a.icon}</span>
            {a.running && <span className={`mt-[3px] h-1 shrink-0 rounded-full ${a.active ? "w-5 bg-[#de86dc]" : "w-2 bg-[#9b9898]"}`} />}
          </button>
        ))}
      </nav>
      <div className="ml-auto flex shrink-0 items-center pr-6 text-sm leading-5">
        <button aria-label="Hidden icons" className="mr-[23px]">
          <svg viewBox="0 0 14 8" className="h-2 w-3.5" fill="none" stroke="#fff" strokeWidth="1.800"><path d="M1 7l6-6 6 6" /></svg>
        </button>
        <svg viewBox="0 0 20 16" className="h-4 w-5"><path d="M4 14a4 4 0 0 1 0-8 6 6 0 0 1 11-1 4.500 4.500 0 0 1 1 9z" fill="#8f8f8f" /><path d="M3 0l15 16" stroke="#fff" strokeWidth="1.300" /></svg>
        <svg viewBox="0 0 14 20" className="ml-6 h-5 w-3.5" fill="none" stroke="#de9bdc" strokeWidth="1.500"><rect x="4" y="1" width="6" height="12" rx="3" /><path d="M1 9c0 9 12 9 12 0M7 16v4" /></svg>
        <button className="ml-[26px] w-[30px] whitespace-nowrap text-center">ENG<br />IN</button>
        <button aria-label="Network, sound and battery" className="ml-[22px] flex items-center gap-2.5">
          <svg viewBox="0 0 20 16" className="h-4 w-5" fill="none" stroke="#fff" strokeWidth="1.500"><path d="M1 6a12.500 12.500 0 0 1 18 0M4 9a8.500 8.500 0 0 1 12 0M6.500 11.800a5 5 0 0 1 7 0" /><circle cx="10" cy="14" r="1.500" fill="#fff" stroke="none" /></svg>
          <svg viewBox="0 0 20 18" className="h-[18px] w-5" fill="none" stroke="#fff" strokeWidth="1.300"><path d="M1 6h3l5-4.500v15L4 12H1zM12 6c1.500 2 1.500 4 0 6M14.500 3.500c3 3.500 3 7.500 0 11M17 1.500c4 4.500 4 10.500 0 15" /></svg>
          <svg viewBox="0 0 20 14" className="h-3.5 w-5" fill="none" stroke="#fff" strokeWidth="1.500"><rect x="1" y="1" width="16" height="12" rx="3" /><rect x="3.500" y="3.500" width="6.500" height="7" fill="#fff" stroke="none" /><path d="M19 5v4" strokeWidth="2" /></svg>
        </button>
        <button className="ml-5 text-right text-[15px] leading-5">15:44<br />26-07-2025</button>
        <button aria-label="Notifications" className="ml-3">
          <svg viewBox="0 0 18 20" className="h-5 w-[18px]" fill="none" stroke="#fff" strokeWidth="1.400"><path d="M9.500 3C5.500 3 3.500 5.500 3.500 8.500v4.500L1.500 16h14l-1.500-2.500V12M6.500 16c0 3 4.500 3 4.500 0M7 8h3.500L7 12h3.500M13 1.500h4l-4 4.500h4" /></svg>
        </button>
      </div>
    </div>
  );
}

export default function App() {
  return (
    <div className="flex min-h-screen flex-col overflow-hidden bg-[#3b3b3b] font-['Open_Sans',sans-serif]">
      <TabBar />
      <Toolbar />
      <Page />
      <Taskbar />
    </div>
  );
}
